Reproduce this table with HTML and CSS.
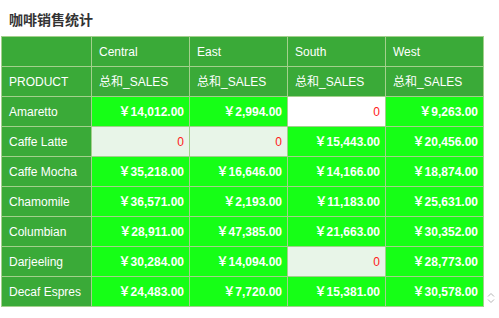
FILE: index.html
```html
<!DOCTYPE html>
<html lang="zh">
<head>
<meta charset="utf-8">
<title>咖啡销售统计</title>
<link rel="stylesheet" href="styles.css">
</head>
<body>
<div class="page">
  <h1 class="title">咖啡销售统计</h1>
  <div class="grid-wrap">
    <table class="pivot">
      <colgroup>
        <col class="c-first">
        <col class="c-val"><col class="c-val"><col class="c-val"><col class="c-val">
      </colgroup>
      <tr class="hdr">
        <td></td><td>Central</td><td>East</td><td>South</td><td>West</td>
      </tr>
      <tr class="hdr">
        <td>PRODUCT</td><td>总和_SALES</td><td>总和_SALES</td><td>总和_SALES</td><td>总和_SALES</td>
      </tr>
      <tr>
        <td class="name">Amaretto</td>
        <td class="v">￥14,012.00</td><td class="v">￥2,994.00</td><td class="z white">0</td><td class="v">￥9,263.00</td>
      </tr>
      <tr>
        <td class="name">Caffe Latte</td>
        <td class="z">0</td><td class="z">0</td><td class="v">￥15,443.00</td><td class="v">￥20,456.00</td>
      </tr>
      <tr>
        <td class="name">Caffe Mocha</td>
        <td class="v">￥35,218.00</td><td class="v">￥16,646.00</td><td class="v">￥14,166.00</td><td class="v">￥18,874.00</td>
      </tr>
      <tr>
        <td class="name">Chamomile</td>
        <td class="v">￥36,571.00</td><td class="v">￥2,193.00</td><td class="v">￥11,183.00</td><td class="v">￥25,631.00</td>
      </tr>
      <tr>
        <td class="name">Columbian</td>
        <td class="v">￥28,911.00</td><td class="v">￥47,385.00</td><td class="v">￥21,663.00</td><td class="v">￥30,352.00</td>
      </tr>
      <tr>
        <td class="name">Darjeeling</td>
        <td class="v">￥30,284.00</td><td class="v">￥14,094.00</td><td class="z">0</td><td class="v">￥28,773.00</td>
      </tr>
      <tr>
        <td class="name">Decaf Espres</td>
        <td class="v">￥24,483.00</td><td class="v">￥7,720.00</td><td class="v">￥15,381.00</td><td class="v">￥30,578.00</td>
      </tr>
    </table>
    <svg class="spinner" width="8" height="12" viewBox="0 0 8 12" aria-hidden="true">
      <path d="M1 4.5 L4 1.5 L7 4.5" fill="none" stroke="#b4b4b4" stroke-width="1"/>
      <path d="M1 7.5 L4 10.5 L7 7.5" fill="none" stroke="#b4b4b4" stroke-width="1"/>
    </svg>
  </div>
</div>
</body>
</html>
```
FILE: styles.css
```css
html, body {
  margin: 0;
  padding: 0;
  background: #ffffff;
}
.page {
  padding: 0 0 0 1px;
  font-family: "Liberation Sans", Arial, "Noto Sans CJK SC", sans-serif;
  font-size: 12px;
}
.title {
  margin: 0;
  padding: 9px 0 0 8px;
  height: 36px;
  box-sizing: border-box;
  font-family: "Noto Sans CJK SC", sans-serif;
  font-size: 14px;
  line-height: 20px;
  font-weight: bold;
  color: #333333;
}
.grid-wrap {
  position: relative;
  width: 498px;
}
.pivot {
  border-collapse: collapse;
  table-layout: fixed;
  width: 483px;
  border: 1px solid #a3d08c;
}
.c-first { width: 90px; }
.c-val { width: 98px; }
.pivot td {
  border: 1px solid #a3d08c;
  height: 30px;
  padding: 0 5px 0 7px;
  box-sizing: border-box;
  color: #ffffff;
  white-space: nowrap;
  overflow: hidden;
  vertical-align: middle;
  line-height: 14px;
}
.pivot tr.hdr td {
  background: #3aaa38;
  text-align: left;
}
.pivot td.name {
  background: #3aaa38;
}
.pivot td.v {
  background: #16ff16;
  text-align: right;
  font-weight: bold;
}
.pivot td.z {
  background: #e8f5e8;
  color: #ff2020;
  text-align: right;
}
.pivot td.z.white {
  background: #ffffff;
}
.spinner {
  position: absolute;
  left: 486px;
  top: 256px;
}
```
